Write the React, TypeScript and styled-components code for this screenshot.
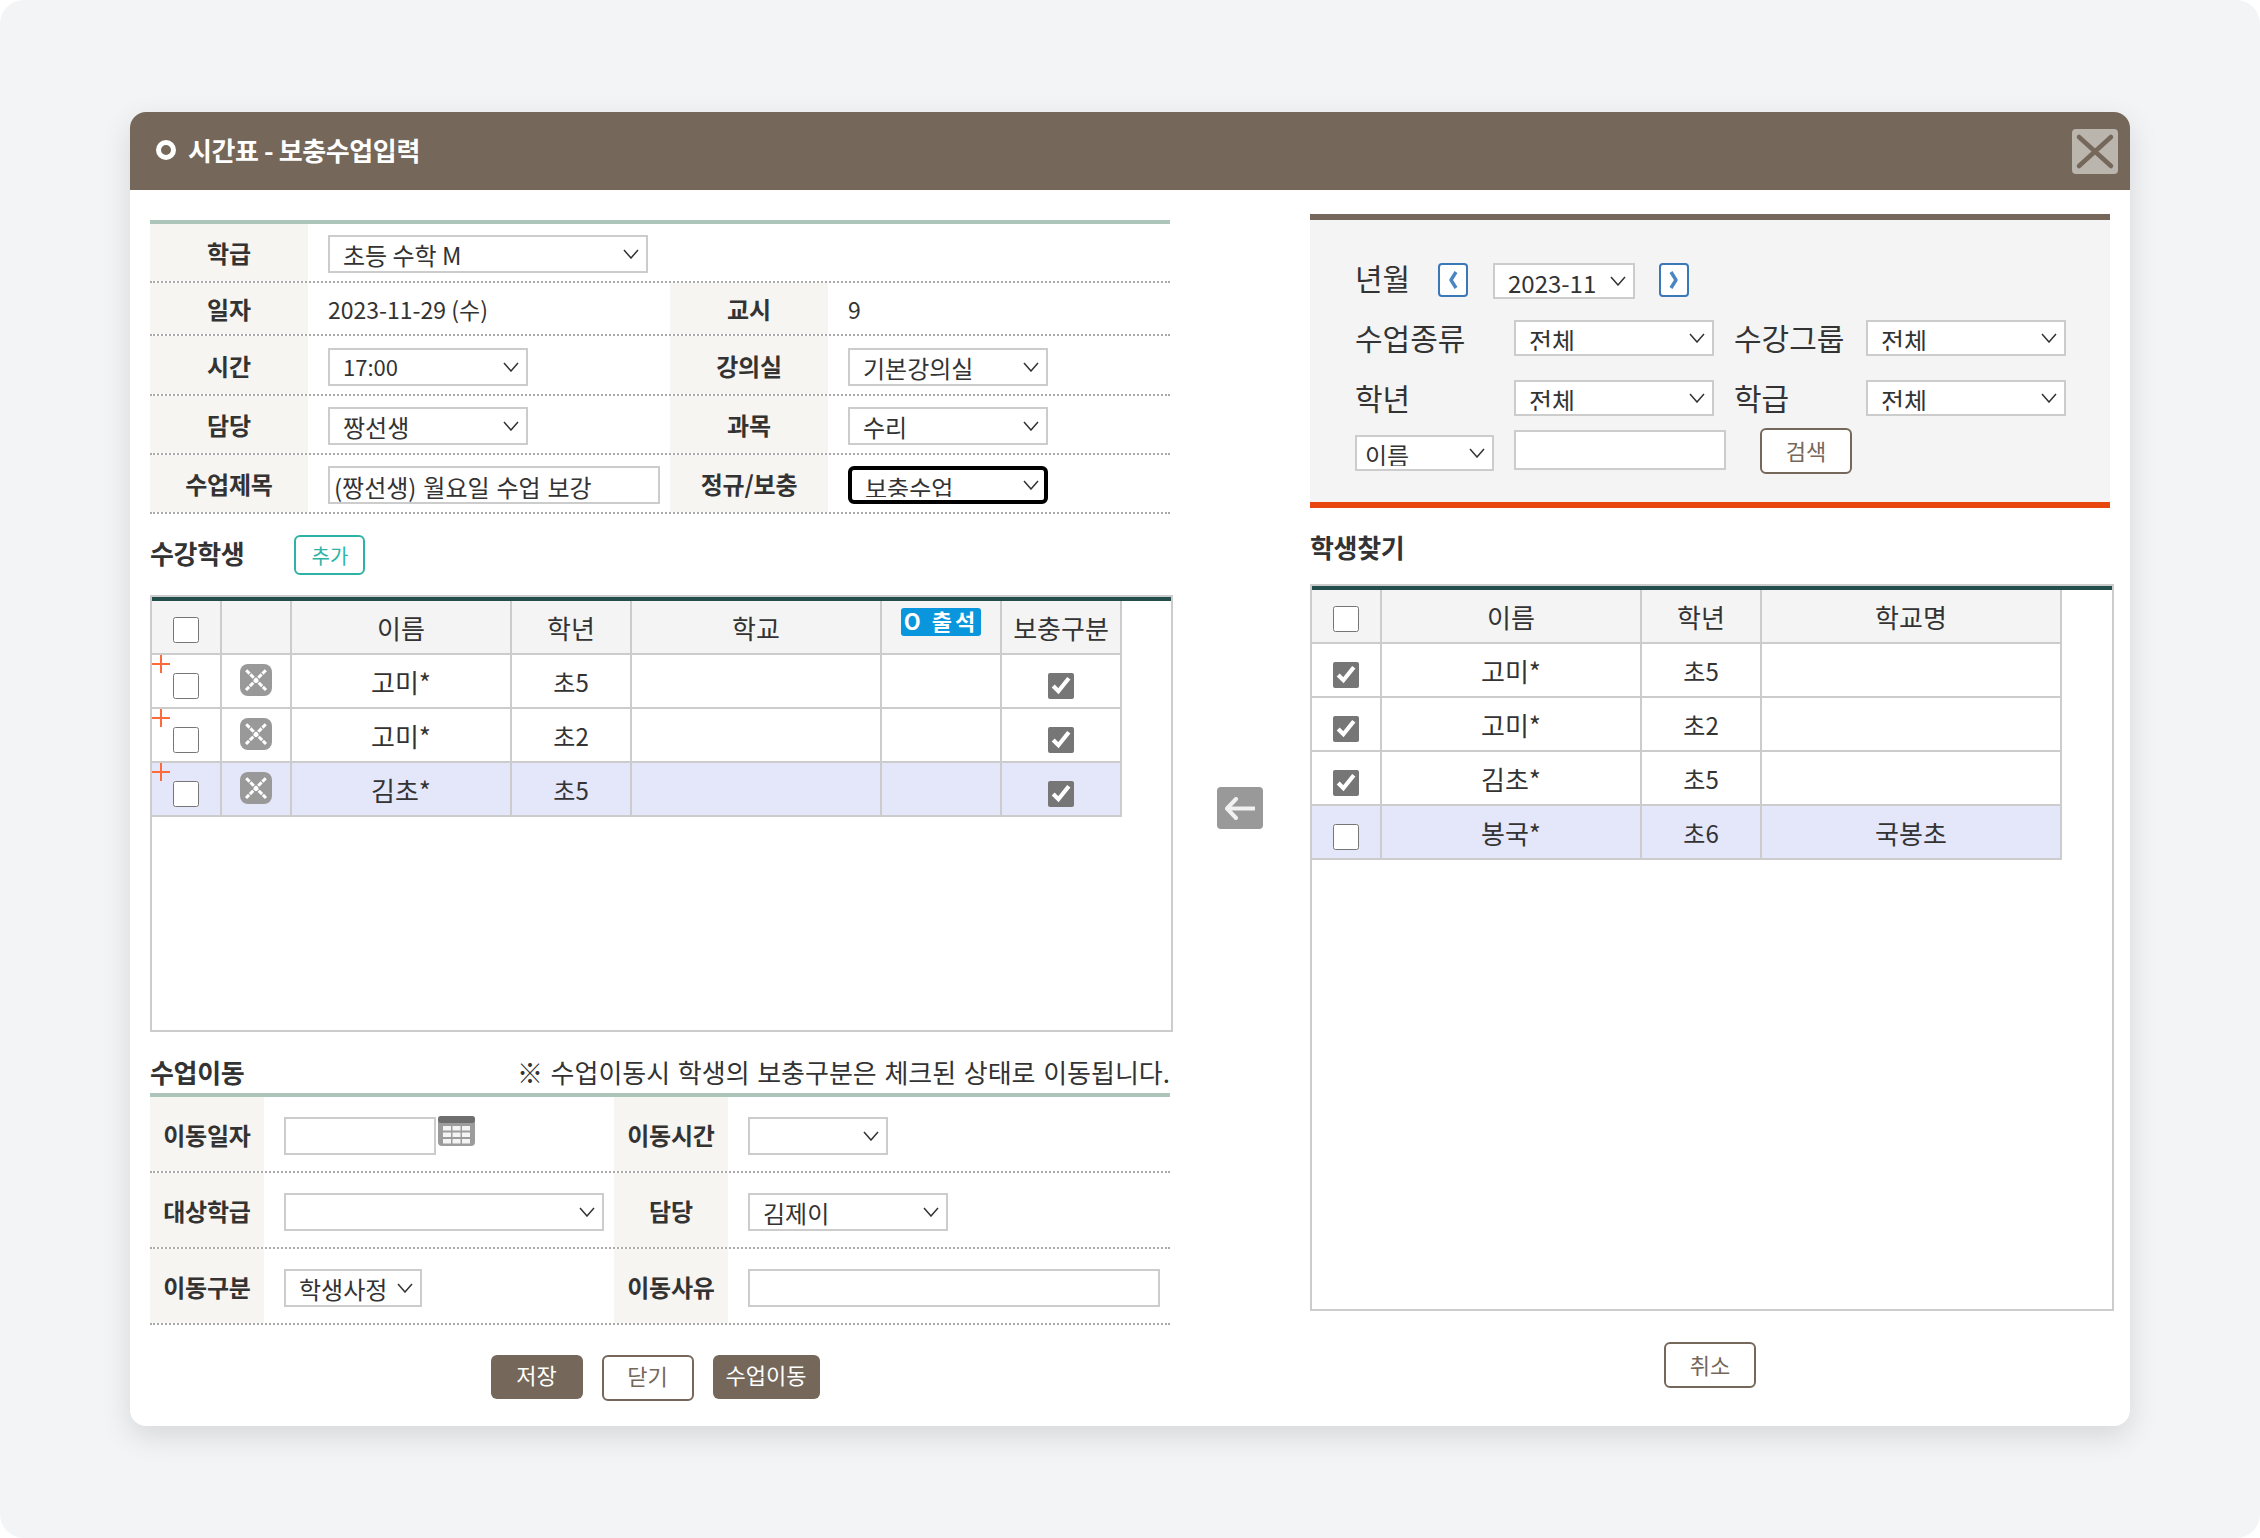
import React from 'react';
import styled, { createGlobalStyle } from 'styled-components';

const GlobalStyle = createGlobalStyle`
  html, body {
    margin: 0;
    padding: 0;
    background: #fff;
  }
  * {
    box-sizing: border-box;
  }
  body, select, input, button {
    font-family: 'Noto Sans CJK KR', 'Noto Sans', sans-serif;
    color: #333;
  }
`;

const sourceRows = [
  { name: '고미*', grade: '초5' },
  { name: '고미*', grade: '초2' },
  { name: '김초*', grade: '초5', selected: true },
];

const searchRows = [
  { name: '고미*', grade: '초5', school: '', checked: true },
  { name: '고미*', grade: '초2', school: '', checked: true },
  { name: '김초*', grade: '초5', school: '', checked: true },
  { name: '봉국*', grade: '초6', school: '국봉초', checked: false, selected: true },
];

const chevron =
  "data:image/svg+xml,%3Csvg xmlns='http://www.w3.org/2000/svg' width='16' height='10' viewBox='0 0 16 10'%3E%3Cpath d='M1 1 L8 9 L15 1' fill='none' stroke='%23333' stroke-width='1.5'/%3E%3C/svg%3E";

const ArrowIcon = () => (
  <svg width="30" height="23" viewBox="0 0 30 23" fill="none">
    <path d="M11 2 L2 11.5 L11 21" stroke="#f1f1f1" strokeWidth="4" strokeLinecap="round" strokeLinejoin="round" />
    <path d="M3 11.5 H29" stroke="#f1f1f1" strokeWidth="4" strokeLinecap="round" />
  </svg>
);

const CloseIcon = () => (
  <svg width="46" height="45" viewBox="0 0 46 45" fill="none">
    <path d="M7 8 L39 37 M39 8 L7 37" stroke="#75675a" strokeWidth="4.5" strokeLinecap="round" />
  </svg>
);

const DeleteIcon = () => (
  <svg width="32" height="32" viewBox="0 0 32 32" fill="none">
    <path d="M6 6 L26 26 M26 6 L6 26" stroke="#fff" strokeWidth="3" strokeDasharray="4.8 1.1" strokeDashoffset="-0.3" />
  </svg>
);

const PlusIcon = () => (
  <svg width="18" height="18" viewBox="0 0 18 18" fill="none">
    <path d="M0 9 H18 M9 0 V18" stroke="#ff6a3d" strokeWidth="2" />
  </svg>
);

const CalendarIcon = () => (
  <svg width="37" height="30" viewBox="0 0 37 30">
    <rect x="0" y="0" width="37" height="30" rx="4" fill="#9c9c9c" />
    <rect x="0" y="0" width="37" height="7" rx="3" fill="#6e6e6e" />
    {[5, 14.5, 24].map((x) =>
      [10, 16.5, 23].map((y) => <rect key={`${x}-${y}`} x={x} y={y} width="8" height="4.5" fill="#f4f4f4" />),
    )}
  </svg>
);

const ChevronIcon = ({ dir }: { dir: 'left' | 'right' }) => (
  <svg width="12" height="20" viewBox="0 0 12 20" fill="none">
    <path
      d={dir === 'left' ? 'M9 2 L4 10 L9 18' : 'M3 2 L8 10 L3 18'}
      stroke="#4a86c0"
      strokeWidth="3.4"
      strokeLinejoin="round"
    />
  </svg>
);

const App = () => {
  return (
    <Frame>
      <GlobalStyle />
      <Modal>
        <Header>
          <Title>
            <Bullet />
            시간표 - 보충수업입력
          </Title>
          <CloseButton type="button" aria-label="닫기">
            <CloseIcon />
          </CloseButton>
        </Header>
        <Body>
          <LeftColumn>
            <GreenRule />
            <FormRow $h={59}>
              <Label>학급</Label>
              <Cell $span={3}>
                <Select $w={320} defaultValue="초등 수학 M">
                  <option>초등 수학 M</option>
                </Select>
              </Cell>
            </FormRow>
            <FormRow $h={53}>
              <Label>일자</Label>
              <Cell>2023-11-29 (수)</Cell>
              <Label>교시</Label>
              <Cell>9</Cell>
            </FormRow>
            <FormRow $h={60}>
              <Label>시간</Label>
              <Cell>
                <Select $w={200} $fs={22} defaultValue="17:00">
                  <option>17:00</option>
                </Select>
              </Cell>
              <Label>강의실</Label>
              <Cell>
                <Select $w={200} defaultValue="기본강의실">
                  <option>기본강의실</option>
                </Select>
              </Cell>
            </FormRow>
            <FormRow $h={59}>
              <Label>담당</Label>
              <Cell>
                <Select $w={200} defaultValue="짱선생">
                  <option>짱선생</option>
                </Select>
              </Cell>
              <Label>과목</Label>
              <Cell>
                <Select $w={200} defaultValue="수리">
                  <option>수리</option>
                </Select>
              </Cell>
            </FormRow>
            <FormRow $h={59}>
              <Label>수업제목</Label>
              <Cell>
                <TextInput $w={332} defaultValue="(짱선생) 월요일 수업 보강" />
              </Cell>
              <Label>정규/보충</Label>
              <Cell>
                <Select $w={200} $focused defaultValue="보충수업">
                  <option>보충수업</option>
                </Select>
              </Cell>
            </FormRow>

            <StudentsHead>
              <Heading>수강학생</Heading>
              <AddButton type="button">추가</AddButton>
            </StudentsHead>

            <TableBox $h={437}>
              <DataTable>
                <colgroup>
                  <col width="70" />
                  <col width="70" />
                  <col width="220" />
                  <col width="120" />
                  <col width="250" />
                  <col width="120" />
                  <col width="120" />
                </colgroup>
                <thead>
                  <tr>
                    <Th>
                      <Check />
                    </Th>
                    <Th />
                    <Th>이름</Th>
                    <Th>학년</Th>
                    <Th>학교</Th>
                    <Th $top>
                      <Badge>O 출석</Badge>
                    </Th>
                    <Th>보충구분</Th>
                  </tr>
                </thead>
                <tbody>
                  {sourceRows.map((row, i) => (
                    <tr key={i}>
                      <Td $selected={row.selected}>
                        <PlusMark>
                          <PlusIcon />
                        </PlusMark>
                        <Check />
                      </Td>
                      <Td $selected={row.selected}>
                        <DeleteBadge>
                          <DeleteIcon />
                        </DeleteBadge>
                      </Td>
                      <Td $selected={row.selected}>{row.name}</Td>
                      <Td $selected={row.selected} $fs={24}>
                        {row.grade}
                      </Td>
                      <Td $selected={row.selected} />
                      <Td $selected={row.selected} />
                      <Td $selected={row.selected}>
                        <Check defaultChecked />
                      </Td>
                    </tr>
                  ))}
                </tbody>
              </DataTable>
            </TableBox>

            <MoveHead>
              <Heading>수업이동</Heading>
              <Note>※ 수업이동시 학생의 보충구분은 체크된 상태로 이동됩니다.</Note>
            </MoveHead>
            <GreenRule />
            <MoveRow>
              <Label>이동일자</Label>
              <MoveCell>
                <TextInput $w={152} />
                <CalendarSlot>
                  <CalendarIcon />
                </CalendarSlot>
              </MoveCell>
              <Label>이동시간</Label>
              <MoveCell>
                <Select $w={140} />
              </MoveCell>
            </MoveRow>
            <MoveRow>
              <Label>대상학급</Label>
              <MoveCell>
                <Select $w={320} />
              </MoveCell>
              <Label>담당</Label>
              <MoveCell>
                <Select $w={200} defaultValue="김제이">
                  <option>김제이</option>
                </Select>
              </MoveCell>
            </MoveRow>
            <MoveRow>
              <Label>이동구분</Label>
              <MoveCell>
                <Select $w={138} defaultValue="학생사정">
                  <option>학생사정</option>
                </Select>
              </MoveCell>
              <Label>이동사유</Label>
              <MoveCell>
                <TextInput $w={412} />
              </MoveCell>
            </MoveRow>
            <ButtonRow>
              <ActionButton type="button" $primary>
                저장
              </ActionButton>
              <ActionButton type="button">닫기</ActionButton>
              <ActionButton type="button" $primary $w={107}>
                수업이동
              </ActionButton>
            </ButtonRow>
          </LeftColumn>

          <MiddleColumn>
            <TransferButton type="button" aria-label="이동">
              <ArrowIcon />
            </TransferButton>
          </MiddleColumn>

          <RightColumn>
            <FilterBox>
              <MonthRow>
                <MonthLabel>년월</MonthLabel>
                <PagerButton type="button" aria-label="이전">
                  <ChevronIcon dir="left" />
                </PagerButton>
                <Select $w={142} defaultValue="2023-11">
                  <option>2023-11</option>
                </Select>
                <PagerButton type="button" aria-label="다음">
                  <ChevronIcon dir="right" />
                </PagerButton>
              </MonthRow>
              <FilterRow>
                <FilterLabel>수업종류</FilterLabel>
                <Select $w={200} $fs={25} defaultValue="전체">
                  <option>전체</option>
                </Select>
                <FilterLabel>수강그룹</FilterLabel>
                <Select $w={200} $fs={25} defaultValue="전체">
                  <option>전체</option>
                </Select>
              </FilterRow>
              <FilterRow>
                <FilterLabel>학년</FilterLabel>
                <Select $w={200} $fs={25} defaultValue="전체">
                  <option>전체</option>
                </Select>
                <FilterLabel>학급</FilterLabel>
                <Select $w={200} $fs={25} defaultValue="전체">
                  <option>전체</option>
                </Select>
              </FilterRow>
              <SearchRow>
                <Select $w={139} $pl={8} defaultValue="이름">
                  <option>이름</option>
                </Select>
                <SearchInput />
                <ActionButton type="button">검색</ActionButton>
              </SearchRow>
            </FilterBox>

            <SearchHead>
              <Heading>학생찾기</Heading>
            </SearchHead>

            <TableBox $h={727}>
              <DataTable $w={750}>
                <colgroup>
                  <col width="70" />
                  <col width="260" />
                  <col width="120" />
                  <col width="300" />
                </colgroup>
                <thead>
                  <tr>
                    <Th>
                      <Check />
                    </Th>
                    <Th>이름</Th>
                    <Th>학년</Th>
                    <Th>학교명</Th>
                  </tr>
                </thead>
                <tbody>
                  {searchRows.map((row, i) => (
                    <tr key={i}>
                      <Td $selected={row.selected}>
                        <Check defaultChecked={row.checked} />
                      </Td>
                      <Td $selected={row.selected}>{row.name}</Td>
                      <Td $selected={row.selected} $fs={24}>
                        {row.grade}
                      </Td>
                      <Td $selected={row.selected}>{row.school}</Td>
                    </tr>
                  ))}
                </tbody>
              </DataTable>
            </TableBox>

            <CancelRow>
              <ActionButton type="button">취소</ActionButton>
            </CancelRow>
          </RightColumn>
        </Body>
      </Modal>
    </Frame>
  );
};

export default App;

const Frame = styled.div`
  width: 2260px;
  height: 1538px;
  padding: 112px 130px 0;
  background: #f3f4f6;
  border-radius: 24px;
`;

const Modal = styled.div`
  width: 2000px;
  height: 1314px;
  background: #fff;
  border-radius: 16px;
  box-shadow: 0 10px 30px rgba(0, 0, 0, 0.12);
`;

const Header = styled.div`
  display: flex;
  align-items: center;
  justify-content: space-between;
  height: 78px;
  padding: 0 12px 0 26px;
  background: #75675a;
  border-radius: 16px 16px 0 0;
`;

const Title = styled.h1`
  display: flex;
  align-items: center;
  gap: 12px;
  margin: 0 0 3px;
  font-size: 26px;
  font-weight: 700;
  letter-spacing: -0.4px;
  color: #fff;
`;

const Bullet = styled.span`
  width: 20px;
  height: 20px;
  border: 5px solid #fff;
  border-radius: 50%;
  background: #75675a;
`;

const CloseButton = styled.button`
  display: flex;
  width: 46px;
  height: 45px;
  padding: 0;
  border: none;
  border-radius: 4px;
  background: #bab5ad;
`;

const Body = styled.div`
  display: flex;
  padding: 24px 0 0 20px;
`;

const LeftColumn = styled.div`
  width: 1023px;
  padding-top: 6px;
`;

const MiddleColumn = styled.div`
  display: flex;
  justify-content: center;
  width: 137px;
  padding: 573px 4px 0 0;
`;

const RightColumn = styled.div`
  width: 804px;
`;

const GreenRule = styled.div`
  width: 1020px;
  height: 4px;
  background: #adc4bb;
`;

const FormRow = styled.div<{ $h: number }>`
  display: grid;
  grid-template-columns: 158px 362px 158px 342px;
  width: 1020px;
  height: ${(props) => props.$h}px;
  border-bottom: 2px dotted #aaa;
  font-size: 23px;
`;

const Label = styled.div`
  display: flex;
  align-items: center;
  justify-content: center;
  background: #f6f5f2;
  font-size: 24px;
  font-weight: 700;
  letter-spacing: -0.2px;
`;

const Cell = styled.div<{ $span?: number }>`
  display: flex;
  align-items: center;
  grid-column: span ${(props) => props.$span || 1};
  padding-left: 20px;
`;

const Select = styled.select<{ $w: number; $focused?: boolean; $fs?: number; $pl?: number }>`
  appearance: none;
  width: ${(props) => props.$w}px;
  height: 38px;
  margin-top: 3px;
  padding: 0 0 3px ${(props) => props.$pl || 13}px;
  background: #fff url("${chevron}") no-repeat right ${(props) => (props.$focused ? 5 : 7)}px center;
  border: ${(props) => (props.$focused ? '4px solid #000' : '2px solid #ccc')};
  border-radius: ${(props) => (props.$focused ? '6px' : '0')};
  font-size: ${(props) => props.$fs || 24}px;
`;

const TextInput = styled.input<{ $w: number }>`
  width: ${(props) => props.$w}px;
  height: 38px;
  margin-top: 3px;
  padding: 2px 4px 0;
  background: #fff;
  border: 2px solid #ccc;
  font-size: 24px;
  word-spacing: 1.5px;
`;

const StudentsHead = styled.div`
  display: flex;
  align-items: flex-start;
  gap: 50px;
  height: 81px;
  padding-top: 21px;
`;

const Heading = styled.h2`
  margin: -2px 0 0;
  font-size: 26px;
  line-height: 40px;
  font-weight: 700;
  letter-spacing: -0.3px;
`;

const AddButton = styled.button`
  width: 71px;
  height: 40px;
  padding: 0;
  background: #fff;
  border: 2px solid #2db3a6;
  border-radius: 6px;
  font-size: 20px;
  color: #2db3a6;
`;

const TableBox = styled.div<{ $h: number }>`
  height: ${(props) => props.$h}px;
  border: 2px solid #ccc;
  &::before {
    content: '';
    display: block;
    height: 4px;
    background: #234e4c;
  }
`;

const DataTable = styled.table<{ $w?: number }>`
  width: ${(props) => props.$w || 970}px;
  table-layout: fixed;
  border-collapse: separate;
  border-spacing: 0;
`;

const Th = styled.th<{ $top?: boolean }>`
  height: 54px;
  padding: ${(props) => (props.$top ? '7px 0 0' : '0')};
  vertical-align: ${(props) => (props.$top ? 'top' : 'middle')};
  background: #f4f4f4;
  border-right: 2px solid #ccc;
  border-bottom: 2px solid #ccc;
  font-size: 26px;
  font-weight: 400;
  input {
    margin-top: -2px;
  }
`;

const Td = styled.td<{ $selected?: boolean; $fs?: number }>`
  position: relative;
  height: 54px;
  padding: 0;
  text-align: center;
  background: ${(props) => (props.$selected ? '#e4e6fa' : '#fff')};
  border-right: 2px solid #ccc;
  border-bottom: 2px solid #ccc;
  font-size: ${(props) => props.$fs || 26}px;
`;

const Check = styled.input.attrs({ type: 'checkbox' })`
  width: 26px;
  height: 26px;
  margin: 2px 0 0;
  vertical-align: middle;
  accent-color: #767676;
`;

const PlusMark = styled.span`
  position: absolute;
  left: 0;
  top: 0;
  display: flex;
`;

const DeleteBadge = styled.span`
  display: inline-flex;
  width: 32px;
  height: 32px;
  margin-top: -10px;
  vertical-align: middle;
  background: #999;
  border-radius: 8px;
`;

const Badge = styled.span`
  display: block;
  width: 80px;
  height: 28px;
  margin: 0 auto;
  line-height: 25px;
  background: #0a96dc;
  border-radius: 3px;
  font-size: 22px;
  font-weight: 700;
  letter-spacing: 3px;
  color: #fff;
`;

const MoveHead = styled.div`
  display: flex;
  align-items: center;
  justify-content: space-between;
  width: 1020px;
  height: 61px;
  padding-top: 21px;
`;

const Note = styled.span`
  margin-top: -3px;
  font-size: 26px;
  word-spacing: 1.8px;
`;

const MoveRow = styled.div`
  display: grid;
  grid-template-columns: 114px 350px 114px 442px;
  width: 1020px;
  height: 76px;
  border-bottom: 2px dotted #aaa;
`;

const MoveCell = styled.div`
  display: flex;
  align-items: center;
  padding-left: 20px;
`;

const CalendarSlot = styled.span`
  display: flex;
  margin: -6px 0 0 2px;
`;

const ButtonRow = styled.div`
  display: flex;
  align-items: flex-start;
  justify-content: center;
  gap: 19px;
  width: 1010px;
  padding-top: 30px;
  button {
    padding-bottom: 6px;
  }
`;

const ActionButton = styled.button<{ $primary?: boolean; $w?: number }>`
  width: ${(props) => props.$w || 92}px;
  height: ${(props) => (props.$primary ? 44 : 46)}px;
  padding: 0 0 3px;
  background: ${(props) => (props.$primary ? '#75675a' : '#fff')};
  border: ${(props) => (props.$primary ? 'none' : '2px solid #75675a')};
  border-radius: 6px;
  font-size: 22px;
  color: ${(props) => (props.$primary ? '#fff' : '#75675a')};
`;

const TransferButton = styled.button`
  display: flex;
  align-items: center;
  justify-content: center;
  width: 46px;
  height: 42px;
  padding: 0;
  background: #999;
  border: none;
  border-radius: 4px;
`;

const FilterBox = styled.div`
  width: 800px;
  height: 294px;
  padding: 43px 0 0 45px;
  background: #f4f4f4;
  border-top: 6px solid #75675a;
  border-bottom: 6px solid #e8450f;
  select {
    height: 36px;
    margin-top: 0;
  }
`;

const MonthRow = styled.div`
  display: flex;
  align-items: flex-start;
  height: 36px;
  select {
    margin-right: 24px;
  }
`;

const MonthLabel = styled.span`
  width: 83px;
  margin-top: -3px;
  font-size: 30px;
  line-height: 34px;
`;

const PagerButton = styled.button`
  display: flex;
  align-items: center;
  justify-content: center;
  width: 30px;
  height: 34px;
  margin-right: 25px;
  padding: 0;
  background: #fff;
  border: 2px solid #3a78b8;
  border-radius: 4px;
`;

const FilterRow = styled.div`
  display: grid;
  grid-template-columns: 159px 220px 132px 200px;
  align-items: center;
  margin-top: 21px;
  & + & {
    margin-top: 24px;
  }
`;

const FilterLabel = styled.span`
  margin-top: -2px;
  font-size: 30px;
  line-height: 36px;
  white-space: nowrap;
`;

const SearchRow = styled.div`
  display: flex;
  align-items: center;
  gap: 20px;
  margin-top: 12px;
  select {
    margin-top: 4px;
  }
  button {
    margin-left: 14px;
  }
`;

const SearchInput = styled.input`
  width: 212px;
  height: 40px;
  margin-top: -2px;
  background: #fff;
  border: 2px solid #ccc;
`;

const SearchHead = styled.div`
  display: flex;
  align-items: center;
  height: 76px;
  padding-top: 4px;
`;

const CancelRow = styled.div`
  display: flex;
  justify-content: center;
  width: 800px;
  padding-top: 31px;
`;
